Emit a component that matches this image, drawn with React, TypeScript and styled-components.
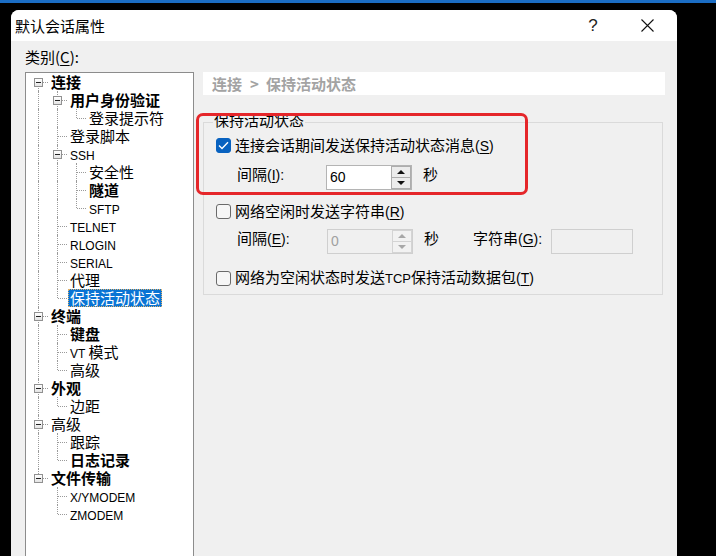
import React from "react";
import styled, { createGlobalStyle } from "styled-components";

type TreeNode = {
  label: string;
  bold?: boolean;
  selected?: boolean;
  children?: TreeNode[];
};

type FlatRow = {
  node: TreeNode;
  guides: boolean[];
  first: boolean;
  last: boolean;
};

const categories: TreeNode[] = [
  {
    label: "连接",
    bold: true,
    children: [
      { label: "用户身份验证", bold: true, children: [{ label: "登录提示符" }] },
      { label: "登录脚本" },
      {
        label: "SSH",
        children: [{ label: "安全性" }, { label: "隧道", bold: true }, { label: "SFTP" }],
      },
      { label: "TELNET" },
      { label: "RLOGIN" },
      { label: "SERIAL" },
      { label: "代理" },
      { label: "保持活动状态", selected: true },
    ],
  },
  {
    label: "终端",
    bold: true,
    children: [{ label: "键盘", bold: true }, { label: "VT 模式" }, { label: "高级" }],
  },
  { label: "外观", bold: true, children: [{ label: "边距" }] },
  {
    label: "高级",
    children: [{ label: "跟踪" }, { label: "日志记录", bold: true }],
  },
  {
    label: "文件传输",
    bold: true,
    children: [{ label: "X/YMODEM" }, { label: "ZMODEM" }],
  },
];

function flatten(nodes: TreeNode[], guides: boolean[], root: boolean, out: FlatRow[]) {
  nodes.forEach((node, i) => {
    const last = i === nodes.length - 1;
    out.push({ node, guides, first: root && i === 0, last });
    if (node.children) flatten(node.children, [...guides, !last], false, out);
  });
  return out;
}

const rows = flatten(categories, [], true, []);

// latin runs get a narrower face, like the dialog font does
function Mixed({ text, size }: { text: string; size: number }) {
  const parts = text.split(/([\x20-\x7e]+)/).filter(Boolean);
  return (
    <>
      {parts.map((p, i) =>
        /^[\x20-\x7e]+$/.test(p) ? (
          <Latin key={i} $size={size}>
            {p}
          </Latin>
        ) : (
          <React.Fragment key={i}>{p}</React.Fragment>
        )
      )}
    </>
  );
}

function SpinBox({ value, disabled }: { value: string; disabled?: boolean }) {
  return (
    <Spin $disabled={disabled}>
      <SpinValue $disabled={disabled}>{value}</SpinValue>
      <SpinButtons>
        <SpinButton $disabled={disabled}>
          <Arrow $up $disabled={disabled} />
        </SpinButton>
        <SpinButton $disabled={disabled}>
          <Arrow $disabled={disabled} />
        </SpinButton>
      </SpinButtons>
    </Spin>
  );
}

export default function App() {
  return (
    <>
      <GlobalStyle />
      <Screen>
        <TopStrip />
        <Dialog>
          <TitleBar>
            <Title>默认会话属性</Title>
            <CaptionButtons>
              <CaptionButton>
                <HelpGlyph>?</HelpGlyph>
              </CaptionButton>
              <CaptionButton>
                <svg width="13" height="13" viewBox="0 0 13 13">
                  <path d="M0.5 0.5 L12.5 12.5 M12.5 0.5 L0.5 12.5" stroke="#111" strokeWidth="1.1" />
                </svg>
              </CaptionButton>
            </CaptionButtons>
          </TitleBar>

          <Body>
            <CategoryLabel>
              类别(<u>C</u>):
            </CategoryLabel>
            <Tree>
              {rows.map((r, i) => (
                <TreeRow key={i}>
                  {r.guides.map((g, j) => (
                    <Guide key={j} $line={g} />
                  ))}
                  <Connector $up={!r.first} $down={!r.last}>
                    {r.node.children && <Expander />}
                  </Connector>
                  <TreeText $bold={r.node.bold} $selected={r.node.selected}>
                    <Mixed text={r.node.label} size={12} />
                  </TreeText>
                </TreeRow>
              ))}
            </Tree>

            <Panel>
              <PageHeader>
                连接<Crumb>&gt;</Crumb>保持活动状态
              </PageHeader>
              <GroupBox>
                <Legend>保持活动状态</Legend>
                <GroupContent>
                  <CheckRow>
                    <CheckBox $checked>
                      <svg width="11" height="9" viewBox="0 0 11 9">
                        <path d="M1 4.6 L4 7.4 L10 1.2" fill="none" stroke="#fff" strokeWidth="1.4" />
                      </svg>
                    </CheckBox>
                    <span>
                      连接会话期间发送保持活动状态消息
                      <Latin $size={14}>
                        (<u>S</u>)
                      </Latin>
                    </span>
                  </CheckRow>
                  <FieldRow $top={11}>
                    <FieldLabel $width={89}>
                      间隔<Latin $size={14}>(<u>I</u>):</Latin>
                    </FieldLabel>
                    <SpinBox value="60" />
                    <Unit>秒</Unit>
                  </FieldRow>

                  <CheckRow $top={12}>
                    <CheckBox />
                    <span>
                      网络空闲时发送字符串
                      <Latin $size={14}>
                        (<u>R</u>)
                      </Latin>
                    </span>
                  </CheckRow>
                  <FieldRow $top={9}>
                    <FieldLabel $width={90}>
                      间隔<Latin $size={14}>(<u>E</u>):</Latin>
                    </FieldLabel>
                    <SpinBox value="0" disabled />
                    <Unit>秒</Unit>
                    <FieldLabel $width={78} $gap={34}>
                      字符串<Latin $size={14}>(<u>G</u>):</Latin>
                    </FieldLabel>
                    <TextBox />
                  </FieldRow>

                  <CheckRow $top={15}>
                    <CheckBox />
                    <span>
                      网络为空闲状态时发送<Latin $size={13}>TCP</Latin>保持活动数据包
                      <Latin $size={14}>
                        (<u>T</u>)
                      </Latin>
                    </span>
                  </CheckRow>
                </GroupContent>
              </GroupBox>
            </Panel>
          </Body>
        </Dialog>
        <Highlight />
      </Screen>
    </>
  );
}

const GlobalStyle = createGlobalStyle`
  html, body {
    margin: 0;
    background: #000;
  }
  body {
    font-family: "Noto Sans CJK SC", "Liberation Sans", sans-serif;
    font-size: 15px;
    color: #000;
  }
  u {
    text-decoration-thickness: 1px;
    text-underline-offset: 2px;
  }
`;

const Screen = styled.div`
  position: relative;
  width: 716px;
  height: 556px;
  overflow: hidden;
  background: #000;
`;

const TopStrip = styled.div`
  height: 3px;
  background: #1b6dc4;
`;

const Dialog = styled.div`
  margin: 7px 0 0 11px;
  width: 666px;
  height: 560px;
  display: flex;
  flex-direction: column;
  background: #f0f0f0;
  border-radius: 8px 8px 0 0;
`;

const TitleBar = styled.div`
  height: 31px;
  flex: 0 0 31px;
  display: flex;
  align-items: center;
  justify-content: space-between;
  padding-left: 4px;
  background: #fff;
  border-radius: 8px 8px 0 0;
`;

const Title = styled.span`
  font-size: 15px;
  line-height: 18px;
`;

const CaptionButtons = styled.div`
  display: flex;
  gap: 8px;
  padding-right: 7px;
`;

const CaptionButton = styled.span`
  width: 46px;
  height: 31px;
  display: flex;
  align-items: center;
  justify-content: center;
`;

const HelpGlyph = styled.span`
  font-family: "Liberation Sans", sans-serif;
  font-size: 17px;
  color: #222;
`;

const Body = styled.div`
  flex: 1;
  display: grid;
  grid-template-columns: 169px 462px;
  grid-template-rows: auto 1fr;
  column-gap: 9px;
  padding: 7px 12px 0 14px;
  min-height: 0;
`;

const CategoryLabel = styled.div`
  grid-column: 1 / 3;
  line-height: 18px;
  margin-bottom: 6px;
`;

const Tree = styled.div`
  background: #fff;
  border: 1px solid #8c8c8c;
  padding: 0 0 0 3px;
  overflow: hidden;
`;

const TreeRow = styled.div`
  display: flex;
  height: 18px;
`;

const Guide = styled.span<{ $line: boolean }>`
  position: relative;
  flex: 0 0 19px;
  &::before {
    content: "";
    display: ${(p) => (p.$line ? "block" : "none")};
    position: absolute;
    left: 9px;
    top: 0;
    bottom: 0;
    border-left: 1px dotted #9a9a9a;
  }
`;

const Connector = styled.span<{ $up: boolean; $down: boolean }>`
  position: relative;
  flex: 0 0 19px;
  &::before {
    content: "";
    position: absolute;
    left: 9px;
    top: ${(p) => (p.$up ? 0 : 9)}px;
    bottom: ${(p) => (p.$down ? 0 : 9)}px;
    border-left: 1px dotted #9a9a9a;
  }
  &::after {
    content: "";
    position: absolute;
    left: 10px;
    right: 0;
    top: 9px;
    border-top: 1px dotted #9a9a9a;
  }
`;

const Expander = styled.span`
  position: absolute;
  z-index: 1;
  left: 5px;
  top: 5px;
  width: 9px;
  height: 9px;
  box-sizing: border-box;
  border: 1px solid #919191;
  background: linear-gradient(#ffffff, #e4e4e4);
  &::after {
    content: "";
    position: absolute;
    left: 1px;
    right: 1px;
    top: 3px;
    border-top: 1px solid #222;
  }
`;

const TreeText = styled.span<{ $bold?: boolean; $selected?: boolean }>`
  margin-left: 1px;
  padding: 0 2px;
  height: 18px;
  line-height: 18px;
  white-space: nowrap;
  font-size: 15px;
  font-weight: ${(p) => (p.$bold ? 700 : 400)};
  color: ${(p) => (p.$selected ? "#fff" : "#000")};
  background: ${(p) => (p.$selected ? "#0a74d4" : "transparent")};
  outline: ${(p) => (p.$selected ? "1px dotted #e2b26a" : "none")};
  outline-offset: -1px;
`;

const Latin = styled.span<{ $size: number }>`
  font-family: "Liberation Sans", sans-serif;
  font-size: ${(p) => p.$size}px;
`;

const Panel = styled.div`
  display: flex;
  flex-direction: column;
`;

const PageHeader = styled.div`
  height: 23px;
  line-height: 23px;
  padding-left: 9px;
  background: #fff;
  color: #a3a3a3;
  font-weight: 700;
  font-size: 15px;
`;

const Crumb = styled.span`
  margin: 0 7px 0 8px;
`;

const GroupBox = styled.fieldset`
  margin: 16px 2px 0 0;
  padding: 3px 0 7px 0;
  border: 1px solid #dadada;
  min-width: 0;
`;

const Legend = styled.legend`
  margin-left: 9px;
  padding: 0 1px 4px;
  line-height: 18px;
  font-size: 15px;
`;

const GroupContent = styled.div`
  display: flex;
  flex-direction: column;
  padding-left: 12px;
`;

const CheckRow = styled.div<{ $top?: number }>`
  display: flex;
  align-items: center;
  gap: 4px;
  height: 18px;
  line-height: 18px;
  margin-top: ${(p) => p.$top ?? 0}px;
  white-space: nowrap;
`;

const CheckBox = styled.span<{ $checked?: boolean }>`
  flex: 0 0 15px;
  width: 15px;
  height: 15px;
  box-sizing: border-box;
  border-radius: 3px;
  border: 1px solid ${(p) => (p.$checked ? "#0862c0" : "#6a6a6a")};
  background: ${(p) => (p.$checked ? "#0862c0" : "#f6f6f6")};
  display: flex;
  align-items: center;
  justify-content: center;
`;

const FieldRow = styled.div<{ $top: number }>`
  display: flex;
  align-items: flex-start;
  height: 25px;
  margin-top: ${(p) => p.$top}px;
  padding-left: 21px;
  white-space: nowrap;
`;

const FieldLabel = styled.span<{ $width: number; $gap?: number }>`
  flex: 0 0 ${(p) => p.$width}px;
  margin-left: ${(p) => p.$gap ?? 0}px;
  line-height: 18px;
`;

const Unit = styled.span`
  margin-left: 11px;
  line-height: 18px;
`;

const Spin = styled.div<{ $disabled?: boolean }>`
  display: flex;
  width: 86px;
  height: 25px;
  box-sizing: border-box;
  border: 1px solid ${(p) => (p.$disabled ? "#cfcfcf" : "#b4b4b4")};
  background: ${(p) => (p.$disabled ? "#f0f0f0" : "#fff")};
`;

const SpinValue = styled.span<{ $disabled?: boolean }>`
  flex: 1;
  padding-left: 3px;
  font-family: "Liberation Sans", sans-serif;
  font-size: 14px;
  line-height: 23px;
  color: ${(p) => (p.$disabled ? "#a0a0a0" : "#000")};
`;

const SpinButtons = styled.div`
  display: flex;
  flex-direction: column;
  width: 20px;
`;

const SpinButton = styled.span<{ $disabled?: boolean }>`
  flex: 1;
  display: flex;
  align-items: center;
  justify-content: center;
  box-sizing: border-box;
  border: 1px solid ${(p) => (p.$disabled ? "#d4d4d4" : "#adadad")};
  background: ${(p) => (p.$disabled ? "#f2f2f2" : "#ececec")};
  & + & {
    border-top: none;
  }
`;

const Arrow = styled.span<{ $up?: boolean; $disabled?: boolean }>`
  width: 0;
  height: 0;
  border-left: 4px solid transparent;
  border-right: 4px solid transparent;
  ${(p) => (p.$up ? "border-bottom" : "border-top")}: 4px solid
    ${(p) => (p.$disabled ? "#a8a8a8" : "#111")};
`;

const TextBox = styled.span`
  width: 82px;
  height: 25px;
  box-sizing: border-box;
  border: 1px solid #cfcfcf;
  background: #f0f0f0;
`;

const Highlight = styled.div`
  position: absolute;
  left: 196px;
  top: 113px;
  width: 332px;
  height: 82px;
  box-sizing: border-box;
  border: 3px solid #e5262a;
  border-radius: 7px;
  pointer-events: none;
`;
